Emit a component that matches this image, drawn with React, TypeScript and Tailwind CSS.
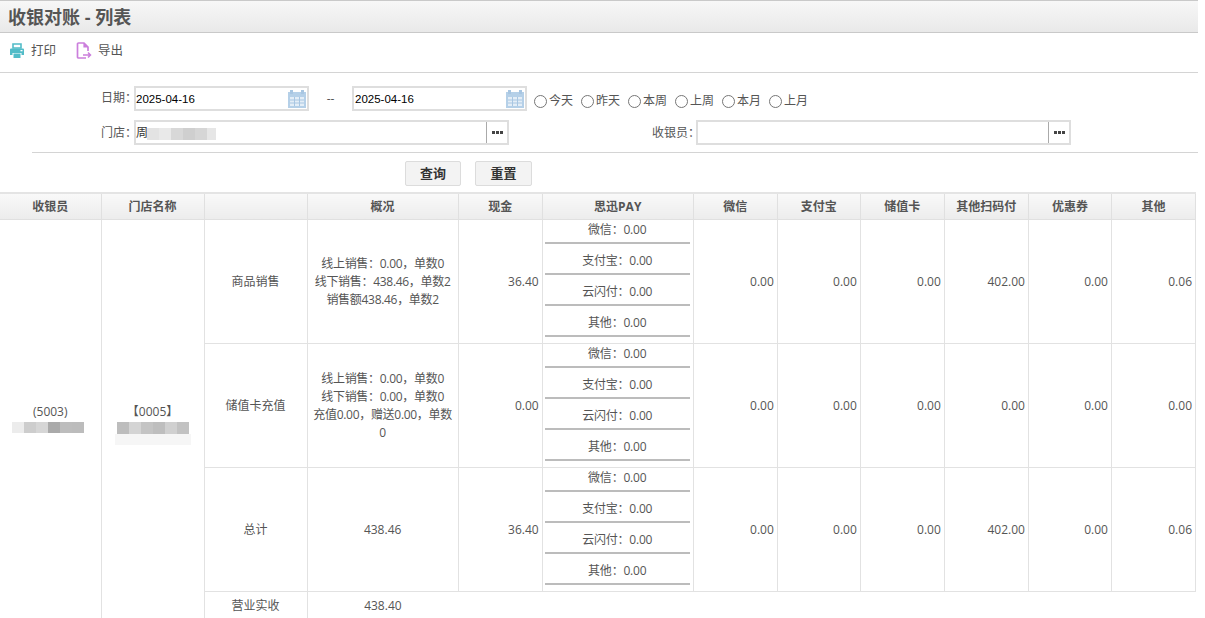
import React from "react";

const font = { fontFamily: '"Open Sans", "Noto Sans CJK SC", sans-serif' };
const arial = { fontFamily: '"Liberation Sans", "Noto Sans CJK SC", sans-serif' };

function Calendar() {
  return (
    <svg width="20" height="20" viewBox="0 0 20 20" className="shrink-0">
      <rect x="1" y="3" width="18" height="16" fill="#b5d0e8" />
      <rect x="3" y="1" width="3" height="4" fill="#a8c6e2" />
      <rect x="14" y="1" width="3" height="4" fill="#a8c6e2" />
      <rect x="3" y="8" width="14" height="9" fill="#e4eef7" />
      <path d="M3 11h14M3 14h14M7.5 8v9M12.5 8v9" stroke="#a8c6e2" strokeWidth="1" />
    </svg>
  );
}

function Printer() {
  return (
    <svg width="16" height="16" viewBox="0 0 16 16">
      <path d="M4 1h8v4H4z" fill="none" stroke="#52bcc8" strokeWidth="1.6" />
      <path d="M2 5.5h12a1 1 0 0 1 1 1V12h-2.5v-2h-9v2H1V6.500a1 1 0 0 1 1-1z" fill="#52bcc8" />
      <path d="M4.500 10.500h7V15h-7z" fill="#52bcc8" />
      <rect x="11.500" y="7" width="2" height="1.300" fill="#fff" />
    </svg>
  );
}

function ExportIcon() {
  return (
    <svg width="16" height="17" viewBox="0 0 16 17">
      <path d="M10 16H2.500a1 1 0 0 1-1-1V2a1 1 0 0 1 1-1H8l4 4v4" fill="none" stroke="#cb7fdc" strokeWidth="1.700" />
      <path d="M8 1v4h4" fill="#cb7fdc" stroke="#cb7fdc" strokeWidth="1.200" />
      <path d="M7 13h7M12 10.500l2.500 2.500-2.500 2.500" fill="none" stroke="#cb7fdc" strokeWidth="1.500" />
    </svg>
  );
}

function Radio({ label }: { label: string }) {
  return (
    <span className="flex items-center w-[47px] shrink-0">
      <span className="w-[13px] h-[13px] rounded-full border border-[#767676] bg-white mr-[2px] mt-[2px] shrink-0" />
      <span>{label}</span>
    </span>
  );
}

function Ellipsis() {
  return (
    <span className="w-[21px] h-full border-l border-[#aaa] flex items-center justify-center gap-[1px] shrink-0">
      <span className="w-[3px] h-[3px] bg-[#444]" />
      <span className="w-[3px] h-[3px] bg-[#444]" />
      <span className="w-[3px] h-[3px] bg-[#444]" />
    </span>
  );
}

function Pay() {
  return (
    <div className="flex flex-col pl-[2px] pr-[3px] tracking-[-0.2px]">
      {["微信：0.00", "支付宝：0.00", "云闪付：0.00", "其他：0.00"].map((t, i) => (
        <div
          key={t}
          className={
            i === 0
              ? "h-[24px] leading-[20px] text-center border-b-2 border-[#bcbcbc]"
              : "h-[31px] pt-[7px] leading-[20px] text-center border-b-2 border-[#bcbcbc]"
          }
        >
          {t}
        </div>
      ))}
    </div>
  );
}

const span = "border border-[#e2e2e2] text-center align-middle p-0";
const td = "border border-[#e2e2e2] text-center align-middle p-0 pt-[2px]";
const num = "border border-[#e2e2e2] text-right align-middle p-0 pt-[2px] pr-[3px]";
const th =
  "border border-[#e0e0e0] bg-gradient-to-b from-[#f9f9f9] to-[#ececec] font-bold text-center p-0 pt-[1px] h-[26px] text-[#555]";

function Nums({ v }: { v: string[] }) {
  return (
    <>
      {v.map((x, i) => (
        <td key={i} className={num}>
          {x}
        </td>
      ))}
    </>
  );
}

export default function App() {
  return (
    <div style={font} className="w-[1205px] h-[618px] overflow-hidden bg-white text-[12px] text-[#555]">
      <div className="w-[1198px]">
        <div className="h-[33px] border-t border-b border-[#c9c9c9] bg-gradient-to-b from-[#f7f7f7] to-[#e9e9e9] pl-[8px] pt-[1px] flex items-center text-[18px] font-bold text-[#555]">
          收银对账 - 列表
        </div>
        <div className="h-[40px] border-b border-[#d4d4d4] flex items-center pl-[9px] pb-[4px] text-[12.5px] text-[#555]">
          <span className="flex items-center gap-[6px] mr-[20px]">
            <Printer />
            <span className="pt-[2px]">打印</span>
          </span>
          <span className="flex items-center gap-[6px]">
            <ExportIcon />
            <span className="pt-[2px]">导出</span>
          </span>
        </div>

        <div className="pt-[13px] flex flex-col">
          <div className="flex items-center h-[25px] pl-[101px]">
            <span className="w-[33px] shrink-0 whitespace-nowrap pb-[2px]">日期：</span>
            <div style={arial} className="w-[175px] h-[25px] border-2 border-[#dedede] flex items-center justify-between text-[11.5px] text-black shrink-0">
              <span className="pt-[2px]">2025-04-16</span>
              <Calendar />
            </div>
            <span className="w-[43px] text-center shrink-0">--</span>
            <div style={arial} className="w-[175px] h-[25px] border-2 border-[#dedede] flex items-center justify-between pl-[1px] text-[11.5px] text-black shrink-0">
              <span className="pt-[2px]">2025-04-16</span>
              <Calendar />
            </div>
            <div className="flex ml-[7px] pt-[4px]">
              {["今天", "昨天", "本周", "上周", "本月", "上月"].map((r) => (
                <Radio key={r} label={r} />
              ))}
            </div>
          </div>
          <div className="flex items-center h-[25px] mt-[9px] pl-[101px]">
            <span className="w-[33px] shrink-0 whitespace-nowrap">门店：</span>
            <div className="w-[375px] h-[25px] border-2 border-[#dedede] flex items-center justify-between shrink-0">
              <span className="flex items-center text-[#333]">
                周
                <span className="flex -ml-[1px] mt-[2px]">
                  <span className="w-[12px] h-[12px] bg-[#e3e3e3]" />
                  <span className="w-[12px] h-[12px] bg-[#e9e9e9]" />
                  <span className="w-[12px] h-[12px] bg-[#d8d8d8]" />
                  <span className="w-[12px] h-[12px] bg-[#cfcfcf]" />
                  <span className="w-[12px] h-[12px] bg-[#d6d6d6]" />
                  <span className="w-[9px] h-[12px] bg-[#e6e6e6]" />
                </span>
              </span>
              <Ellipsis />
            </div>
            <span className="ml-[143px] w-[44px] shrink-0 whitespace-nowrap">收银员：</span>
            <div className="w-[375px] h-[25px] border-2 border-[#dedede] flex items-center justify-end shrink-0">
              <Ellipsis />
            </div>
          </div>
          <div className="ml-[32px] mt-[7px] border-t border-[#d4d4d4]" />
          <div className="flex pl-[405px] gap-[14px] mt-[8px]">
            <button className="w-[56px] h-[25px] border border-[#dcdcdc] rounded-[2px] bg-[#f3f3f3] font-bold text-[13px] text-[#333]">
              查询
            </button>
            <button className="w-[57px] h-[25px] border border-[#dcdcdc] rounded-[2px] bg-[#f3f3f3] font-bold text-[13px] text-[#333]">
              重置
            </button>
          </div>
        </div>

        <table className="mt-[6px] w-[1196px] table-fixed border-collapse border-t-2 border-[#e4e4e4]">
          <colgroup>
            <col className="w-[101px]" />
            <col className="w-[103px]" />
            <col className="w-[103px]" />
            <col className="w-[151px]" />
            <col className="w-[84px]" />
            <col className="w-[151px]" />
            <col className="w-[84px]" />
            <col className="w-[83px]" />
            <col className="w-[84px]" />
            <col className="w-[84px]" />
            <col className="w-[83px]" />
            <col className="w-[84px]" />
          </colgroup>
          <thead>
            <tr>
              {["收银员", "门店名称", "", "概况", "现金", "思迅PAY", "微信", "支付宝", "储值卡", "其他扫码付", "优惠券", "其他"].map((h, i) => (
                <th key={i} className={i === 0 ? th + " border-l-0" : th}>
                  {h}
                </th>
              ))}
            </tr>
          </thead>
          <tbody>
            <tr className="h-[124px]">
              <td rowSpan={4} className={span + " border-l-0"}>
                <div className="pb-[2px]">
                  <div>(5003)</div>
                  <div className="flex justify-start ml-[12px] mt-[1px] h-[11px]">
                    <span className="w-[12px] bg-[#ececec]" />
                    <span className="w-[12px] bg-[#cdcdcd]" />
                    <span className="w-[12px] bg-[#d6d6d6]" />
                    <span className="w-[12px] bg-[#aaaaaa]" />
                    <span className="w-[12px] bg-[#bdbdbd]" />
                    <span className="w-[12px] bg-[#bcbcbc]" />
                  </div>
                </div>
              </td>
              <td rowSpan={4} className={span}>
                <div className="pt-[10px]">
                  <div>【0005】</div>
                  <div className="flex justify-center mt-[1px] h-[12px]">
                    <span className="w-[12px] bg-[#bdbdbd]" />
                    <span className="w-[12px] bg-[#d4d4d4]" />
                    <span className="w-[12px] bg-[#c4c4c4]" />
                    <span className="w-[12px] bg-[#bebebe]" />
                    <span className="w-[12px] bg-[#d0d0d0]" />
                    <span className="w-[12px] bg-[#c2c2c2]" />
                  </div>
                  <div className="h-[11px] w-[76px] mx-auto bg-[#f6f6f6]" />
                </div>
              </td>
              <td className={td}>商品销售</td>
              <td className={td + " leading-[18px] tracking-[-0.3px]"}>
                线上销售：0.00，单数0
                <br />
                线下销售：438.46，单数2
                <br />
                销售额438.46，单数2
              </td>
              <td className={num}>36.40</td>
              <td className="border border-[#e2e2e2] align-top p-0">
                <Pay />
              </td>
              <Nums v={["0.00", "0.00", "0.00", "402.00", "0.00", "0.06"]} />
            </tr>
            <tr className="h-[124px]">
              <td className={td}>储值卡充值</td>
              <td className={td + " leading-[18px] px-[3px] tracking-[-0.3px]"}>
                线上销售：0.00，单数0
                <br />
                线下销售：0.00，单数0
                <br />
                充值0.00，赠送0.00，单数
                <br />0
              </td>
              <td className={num}>0.00</td>
              <td className="border border-[#e2e2e2] align-top p-0">
                <Pay />
              </td>
              <Nums v={["0.00", "0.00", "0.00", "0.00", "0.00", "0.00"]} />
            </tr>
            <tr className="h-[124px]">
              <td className={td}>总计</td>
              <td className={td}>438.46</td>
              <td className={num}>36.40</td>
              <td className="border border-[#e2e2e2] align-top p-0">
                <Pay />
              </td>
              <Nums v={["0.00", "0.00", "0.00", "402.00", "0.00", "0.06"]} />
            </tr>
            <tr className="h-[28px]">
              <td className={td}>营业实收</td>
              <td className={td + " border-r-0"}>438.40</td>
              <td colSpan={8} className="border-t border-[#e2e2e2]" />
            </tr>
          </tbody>
        </table>
      </div>
    </div>
  );
}
